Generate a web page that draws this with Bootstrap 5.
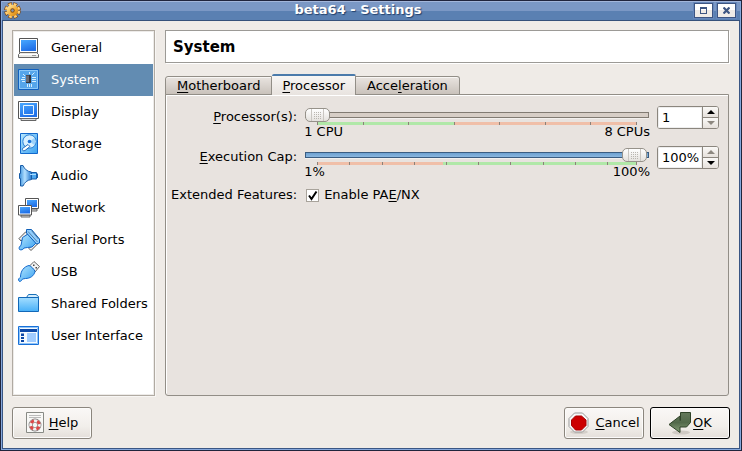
<!DOCTYPE html>
<html lang="en">
<head>
<meta charset="utf-8">
<meta name="viewport" content="width=device-width, initial-scale=1">
<title>beta64 - Settings</title>
<link href="https://cdn.jsdelivr.net/npm/bootstrap@5.3.0/dist/css/bootstrap.min.css" rel="stylesheet">
<style>
body { font: 13px/16px "DejaVu Sans", sans-serif; color: #000; background: #efebe7; }
u { text-decoration-thickness: 1px; text-underline-offset: 2px; text-decoration-skip-ink: none; }
.window { border: 1px solid #20243c; }
.window-inner { border: 1px solid #87a8dc; border-top: 0; }
.titlebar { height: 20px; padding: 0 4px 0 2px; background: linear-gradient(#a3b6da 0 1px, #7b98c5 1px 10px, #5a80b2 10px 19px, #35507a 19px); }
.titlebar h1 { font-size: 13px; line-height: 18px; font-weight: bold; color: #fff; text-shadow: 1px 1px 1px #23406c; }
.win-keys { gap: 4px; padding-top: 2px; }
.win-btn { width: 19px; height: 15px; padding: 0; border: 1px solid #3d5582; background: linear-gradient(#fff 50%, #efebe7 50%); box-shadow: 0 0 0 1px #6687bb; }
.win-btn svg { display: block; margin: auto; }
.client { border: solid #3a5684; border-width: 0 1px 1px; padding: 9px; }
.categories { width: 143px; border: 1px solid #b0aaa2; box-shadow: inset 0 0 0 1px #edebe9, 1px 1px 0 #f8f6f4; background: #fff; padding: 1px; border-radius: 0; }
.categories .list-group-item { height: 32px; padding: 0 4px; gap: 10px; border: 0; color: #000; background: none; }
.categories .list-group-item.active { margin: 0; background: #628cb2; color: #fff; }
.categories svg { width: 23px; height: 23px; margin-top: 1px; flex: none; }
.page { margin: 0 1px 0 10px; }
.page-title { font-size: 15px; line-height: 20px; font-weight: bold; border: 1px solid #9c9a96; background: #fff; padding: 6px 7px 5px; box-shadow: 1px 1px 0 #fff; margin-bottom: 11px; }
.sheets { border: 0; align-items: flex-end; margin-bottom: -1px; position: relative; --bs-nav-tabs-border-width: 0; }
.sheets .nav-link { font-size: 13px; line-height: 16px; padding: 1px 11px 0; margin: 0; color: #000; border: 1px solid #928e87; border-left-width: 0; border-radius: 0; background: linear-gradient(#e9e4e0, #c9c2bb); box-shadow: inset 0 1px 0 #f8f6f4; }
.sheets .nav-item:first-child .nav-link { border-left-width: 1px; border-top-left-radius: 3px; }
.sheets .nav-item:last-child .nav-link { border-top-right-radius: 3px; }
.sheets .nav-link.active { padding: 2px 10px 1px; color: #000; border: 1px solid #928e87; border-top: 2px solid #4b7bab; border-bottom: 0; border-left: 0; border-radius: 2px 2px 0 0; background: linear-gradient(#f8f6f4, #e8e3df); }
.sheet { border: 1px solid #928e87; border-radius: 0 0 3px 3px; background: #e8e3df; box-shadow: inset 1px 1px 0 #fff; padding: 11px 9px 11px 5px; }
.form-rows { display: grid; grid-template-columns: auto 1fr 62px; column-gap: 8px; row-gap: 7px; align-items: start; }
.form-rows > label { text-align: right; padding-top: 3px; }
.slider-box { padding-top: 2px; }
.slide { display: block; width: 100%; height: 14px; margin: 0; appearance: none; background: none; }
.slide::-webkit-slider-runnable-track { height: 6px; border: 1px solid #817b72; background: #d7cec6; box-shadow: 0 1px 0 #f3f0ed; }
.slide.full::-webkit-slider-runnable-track { border-color: #3a5c80; background: linear-gradient(#6ca0d0, #8ab6de); }
.slide::-webkit-slider-thumb { appearance: none; width: 25px; height: 14px; margin: -5px -1px 0; border: 1px solid #96928a; border-radius: 5px;
  background: url("data:image/svg+xml,%3Csvg xmlns='http://www.w3.org/2000/svg' width='7' height='7'%3E%3Cpath d='M0 .5h7M0 2.5h7M0 4.500h7M0 6.500h7' stroke='%23b9b6b0' stroke-dasharray='1 1'/%3E%3C/svg%3E") center no-repeat,
  linear-gradient(90deg, transparent 5px, #c9c6c1 5px 6px, transparent 6px 17px, #c9c6c1 17px 18px, transparent 18px),
  linear-gradient(#fff, #e4e1dd); }
.scale { height: 3px; margin: 0 12px; border-right: 1px solid #8b8178; }
.scale i { flex: 1 1 0; border-left: 1px solid #8b8178; background: #f0bfa8; }
.scale i.ok { background: #b0e8a8; }
.scale i.mix { background: linear-gradient(90deg, #f0bfa8 90%, #b0e8a8 90%); }
.scale i.last { flex-grow: 0.9; }
.ends { line-height: 14px; margin: 0 -1px; }
.spin { height: 23px; border: 1px solid #8b867e; border-radius: 3px; background: #fff; overflow: hidden; }
.spin input { min-width: 0; width: 45px; padding: 0 0 0 4px; border: 0; background: #fff; box-shadow: inset 0 0 0 1px #eee; outline: 0; font: inherit; }
.spin-keys { width: 16px; border-left: 1px solid #8b867e; }
.spin-keys button { flex: 1; padding: 0; border: 0; background: linear-gradient(#faf9f7, #e6e1dc); line-height: 0; }
.spin-keys button + button { border-top: 1px solid #8b867e; }
.spin-keys button:disabled path { fill: #8d8880; }
.features { grid-column: 2 / 4; }
.row-name, .features { padding-top: 1px; }
.tick { appearance: none; width: 13px; height: 13px; margin: 0 5px 0 1px; border: 1px solid #a8a39b; background: #fff url("data:image/svg+xml,%3Csvg xmlns='http://www.w3.org/2000/svg' viewBox='0 0 11 11'%3E%3Cpath d='M2 5.5 4.5 9 9.5 1.5' fill='none' stroke='%23000' stroke-width='2'/%3E%3C/svg%3E"); }
.dlg-btn { min-width: 80px; height: 32px; padding: 0 3px; gap: 5px; font-size: 13px; line-height: 16px; color: #000; border: 1px solid #8b867e; border-radius: 3px; background: linear-gradient(#faf8f6, #f2efeb 60%, #e4dfda); box-shadow: inset 0 0 0 1px #fcfbfa; }
.dlg-btn.main { gap: 1px; border-color: #000; }
.dlg-keys { gap: 6px; margin-top: 11px; }
</style>
<script src="https://cdn.jsdelivr.net/npm/bootstrap@5.3.0/dist/js/bootstrap.bundle.min.js"></script>
</head>
<body>
<svg width="0" height="0" class="position-absolute" aria-hidden="true">
  <defs>
    <linearGradient id="scr" x1="0" y1="0" x2="0.4" y2="1"><stop offset="0" stop-color="#48a8ff"/><stop offset="1" stop-color="#2070e8"/></linearGradient>
    <linearGradient id="sky" x1="0" y1="0" x2="1" y2="1"><stop offset="0" stop-color="#b8e8ff"/><stop offset="1" stop-color="#38a0f0"/></linearGradient>
    <linearGradient id="folder" x1="0" y1="0" x2="0" y2="1"><stop offset="0" stop-color="#a4deff"/><stop offset="1" stop-color="#48b0f8"/></linearGradient>
    <linearGradient id="cone" x1="0" y1="0" x2="1" y2="0"><stop offset="0" stop-color="#3a90dc"/><stop offset=".45" stop-color="#b4e0ff"/><stop offset="1" stop-color="#2478d0"/></linearGradient>
    <linearGradient id="gold" x1="0" y1="0" x2="1" y2="1"><stop offset="0" stop-color="#fff0b0"/><stop offset=".6" stop-color="#f0a830"/><stop offset="1" stop-color="#c87810"/></linearGradient>
    <linearGradient id="leaf" x1="0" y1="0" x2="0" y2="1"><stop offset="0" stop-color="#64795b"/><stop offset=".5" stop-color="#52694a"/><stop offset="1" stop-color="#87a078"/></linearGradient>
  </defs>
</svg>
<div class="window min-vh-100 d-flex">
<div class="window-inner flex-fill d-flex flex-column">
  <header class="titlebar d-flex align-items-start">
    <svg width="18" height="18" viewBox="0 0 18 18" aria-hidden="true">
      <circle cx="8.500" cy="9.500" r="6.300" fill="none" stroke="#7b3f08" stroke-width="4" stroke-dasharray="3.600 1.348"/>
      <circle cx="8.500" cy="9.500" r="6.300" fill="none" stroke="#ffd078" stroke-width="2.800" stroke-dasharray="2.700 2.248" stroke-dashoffset="-.45"/>
      <circle cx="8.500" cy="9.500" r="5.700" fill="url(#gold)"/>
      <circle cx="8.500" cy="9.500" r="2.200" fill="#8a5010"/><circle cx="8.500" cy="9.500" r="1.200" fill="#8398b8"/>
    </svg>
    <h1 class="flex-fill text-center m-0">beta64 - Settings</h1>
    <div class="win-keys d-flex">
      <button type="button" class="win-btn" aria-label="Maximize"><svg width="7" height="7" viewBox="0 0 7 7"><path d="M0 0h7v7H0zM1 2v4h5V2z" fill="#3d5582" fill-rule="evenodd"/></svg></button>
      <button type="button" class="win-btn" aria-label="Close"><svg width="7" height="7" viewBox="0 0 7 7"><path d="M.5.5 6.500 6.500M6.500.5.5 6.500" stroke="#3d5582" stroke-width="2.200"/></svg></button>
    </div>
  </header>
  <main class="client flex-fill d-flex flex-column">
    <div class="d-flex flex-fill">
      <nav class="categories list-group flex-shrink-0" aria-label="Categories">
        <a href="#" class="list-group-item d-flex align-items-center"><svg viewBox="0 0 23 23"><path d="M1.500 1.500h18v14h-18z" fill="#fff" stroke="#555"/><path d="M3 3h15v11H3z" fill="url(#scr)"/><path d="M2.500 15.500h16l2 2v3H.5v-3z" fill="#e8e8e4" stroke="#666"/><path d="M1 17.500h19" stroke="#fff"/><path d="M14 18.500h4" stroke="#999"/></svg>General</a>
        <a href="#" class="list-group-item active d-flex align-items-center" aria-current="true"><svg viewBox="0 0 23 23"><path d="M.5.5h20v20H.5z" fill="#55a5ea" stroke="#1060c0"/><path d="M1.500 1.500h18v18h-18z" fill="none" stroke="#8cc8f8"/><path d="M8 6h5v8H8z" fill="#33343c"/><path d="M8 6.500h3V13H8z" fill="#686a74"/><path d="M4 8.500h3M3 10.500h4M4 12.500h3M14 8.500h4M14 10.500h4M14 12.500h4M9.500 15v3M11.500 15v3M13.500 15v3M5 5l2 2M11.500 5V3M14 6l2.500-2.500" stroke="#d5efff"/></svg>System</a>
        <a href="#" class="list-group-item d-flex align-items-center"><svg viewBox="0 0 23 23"><path d="M.5.500h20v17h-20z" fill="#fff" stroke="#555"/><path d="M2 2h17v14H2z" fill="url(#scr)"/><path d="M5.500 4.500h10v9h-10z" fill="none" stroke="#e6f5ff"/><path d="M3 17.500h15v2H3z" fill="#ddd" stroke="#666"/></svg>Display</a>
        <a href="#" class="list-group-item d-flex align-items-center"><svg viewBox="0 0 23 23"><path d="M2.500.5h17v20h-17z" fill="url(#sky)" stroke="#1268cc"/><circle cx="11.500" cy="8.500" r="6.700" fill="#d8f0ff" stroke="#2880d8"/><path d="M11.500 8.500 17 4.500v8z" fill="#9cd2fa"/><circle cx="11.500" cy="8.500" r="1.800" fill="#1870d8"/><path d="m4.500 15.500 5.500-4 2 2-5 4c-2 1-3-.5-2.500-2z" fill="#fff" stroke="#1460b8" stroke-width=".9"/></svg>Storage</a>
        <a href="#" class="list-group-item d-flex align-items-center"><svg viewBox="0 0 23 23"><path d="M13 7.500h5.500v6.500H13z" fill="#4ca8f0" stroke="#185ca8"/><path d="M18.500 8.500h1.500v4.500h-1.500z" fill="#1c60a8"/><path d="M2.500.5h2.500c1.500 3.500 4 6 8.500 6.500v7.500c-4.500.5-7 3-8.500 6.500H2.500V13.500h-1v-5h1z" fill="url(#cone)" stroke="#185ca8"/><path d="M12 9.500h6" stroke="#aadcff"/></svg>Audio</a>
        <a href="#" class="list-group-item d-flex align-items-center"><svg viewBox="0 0 23 23"><path d="M11 12h8v2h-8z" fill="#ddd" stroke="#666"/><path d="M7.500 1.500h13v10h-13z" fill="#fff" stroke="#555"/><path d="M9 3h10v7H9z" fill="url(#scr)"/><path d="M3 18h9v2H3z" fill="#ddd" stroke="#666"/><path d="M.5 8.500h13v9.500H.5z" fill="#fff" stroke="#555"/><path d="M2 10h10v6.500H2z" fill="url(#scr)"/></svg>Network</a>
        <a href="#" class="list-group-item d-flex align-items-center"><svg viewBox="0 0 23 23"><path d="M1 9.500 7.500 3 10 4.500 3 12zM11 19.500l6-6 2.500 1.500-6.500 6.500z" fill="#eee" stroke="#555"/><path d="M4.500 8.500 10 5l8 9-4 4-4.500.5L6 19c-.5 1.500-3 2.500-4.500 1.500-1-1.500 0-3.500 1.500-4z" fill="url(#sky)" stroke="#1268cc"/><path d="M8.500.5h5l8 9.500v4L18.500 15 8.500 4z" fill="#90ceff" stroke="#1060b8"/><path d="M10 2.500 19.500 13M13.500 1.500l7 8.500" fill="none" stroke="#446a90" stroke-width=".8"/></svg>Serial Ports</a>
        <a href="#" class="list-group-item d-flex align-items-center"><svg viewBox="0 0 23 23"><path d="m11.500 5 4.500-4.500 5.500 5L17 11z" fill="#f4f4f4" stroke="#666"/><path d="M15 3.500h1.500V5H15zM17.500 6H19v1.500h-1.500z" fill="#444"/><path d="M11 4.500c2 .5 5.500 4 6 6-1 4.500-5 7-9.500 7-1 .5-2 0-3 .5-.5 1-1.500 2.500-3 2.500l-1-1.500c0-1.500 1-2 2-3C2.500 10 6 5.500 11 4.500z" fill="url(#sky)" stroke="#1268cc"/></svg>USB</a>
        <a href="#" class="list-group-item d-flex align-items-center"><svg viewBox="0 0 23 23"><path d="M8.500 4.500 10.500 1.500h7.500l2.500 2V8h-12z" fill="#d5edfc" stroke="#1870b8"/><path d="M.5 4.500h20v14H.5z" fill="url(#folder)" stroke="#1268b8"/></svg>Shared Folders</a>
        <a href="#" class="list-group-item d-flex align-items-center"><svg viewBox="0 0 23 23"><path d="M.5 1.500h20v18H.5z" fill="#f4faff" stroke="#1870d8"/><path d="M1.500 2.500h18v16h-18z" fill="none" stroke="#90c4f8"/><path d="M2 4h17v3H2z" fill="#0b48a8"/><path d="M3 8.500h3V11H3zM3 12h3v2H3zM3 15h3v2H3z" fill="#0b48a8"/><path d="M9 8h9v9H9z" fill="#a0ccff"/></svg>User Interface</a>
      </nav>
      <section class="page flex-fill d-flex flex-column">
        <h2 class="page-title">System</h2>
        <ul class="nav nav-tabs sheets" role="tablist">
          <li class="nav-item"><button type="button" class="nav-link" role="tab"><u>M</u>otherboard</button></li>
          <li class="nav-item"><button type="button" class="nav-link active" role="tab" aria-selected="true"><u>P</u>rocessor</button></li>
          <li class="nav-item"><button type="button" class="nav-link" role="tab">Acce<u>l</u>eration</button></li>
        </ul>
        <div class="sheet flex-fill">
          <div class="form-rows">
            <label for="cpus"><u>P</u>rocessor(s):</label>
            <div class="slider-box">
              <input type="range" class="slide" id="cpus" min="1" max="8" value="1">
              <div class="scale d-flex"><i class="ok"></i><i class="ok"></i><i class="ok"></i><i></i><i></i><i></i><i></i></div>
              <div class="ends d-flex justify-content-between"><span>1 CPU</span><span>8 CPUs</span></div>
            </div>
            <div class="spin d-flex">
              <input type="text" value="1" aria-label="Processor count">
              <div class="spin-keys d-flex flex-column">
                <button type="button" aria-label="More"><svg width="8" height="4" viewBox="0 0 8 4"><path d="M0 4 4 0l4 4z"/></svg></button>
                <button type="button" aria-label="Fewer" disabled><svg width="8" height="4" viewBox="0 0 8 4"><path d="M0 0h8L4 4z"/></svg></button>
              </div>
            </div>
            <label for="cap"><u>E</u>xecution Cap:</label>
            <div class="slider-box">
              <input type="range" class="slide full" id="cap" min="1" max="100" value="100">
              <div class="scale d-flex"><i></i><i></i><i></i><i class="mix"></i><i class="ok"></i><i class="ok"></i><i class="ok"></i><i class="ok"></i><i class="ok"></i><i class="ok last"></i></div>
              <div class="ends d-flex justify-content-between"><span>1%</span><span>100%</span></div>
            </div>
            <div class="spin d-flex">
              <input type="text" value="100%" aria-label="Execution cap">
              <div class="spin-keys d-flex flex-column">
                <button type="button" aria-label="Raise" disabled><svg width="8" height="4" viewBox="0 0 8 4"><path d="M0 4 4 0l4 4z"/></svg></button>
                <button type="button" aria-label="Lower"><svg width="8" height="4" viewBox="0 0 8 4"><path d="M0 0h8L4 4z"/></svg></button>
              </div>
            </div>
            <span class="row-name text-end">Extended Features:</span>
            <div class="features d-flex align-items-center">
              <input type="checkbox" class="tick" id="pae" checked><label for="pae">Enable PA<u>E</u>/NX</label>
            </div>
          </div>
        </div>
      </section>
    </div>
    <footer class="dlg-keys d-flex">
      <button type="button" class="btn dlg-btn me-auto d-flex align-items-center justify-content-center"><svg width="18" height="22" viewBox="0 0 18 22"><path d="M.5.5h17v20H.5z" fill="#f8f8f6" stroke="#888a85"/><path d="M3 3.500h12M3 5.500h12" stroke="#bbb"/><circle cx="9" cy="13" r="4.300" fill="none" stroke="#777" stroke-width="4.200"/><circle cx="9" cy="13" r="4.300" fill="none" stroke="#f2eeee" stroke-width="3"/><circle cx="9" cy="13" r="4.300" fill="none" stroke="#dc4848" stroke-width="3" stroke-dasharray="3.380 3.374" stroke-dashoffset="5"/></svg><span><u>H</u>elp</span></button>
      <button type="button" class="btn dlg-btn d-flex align-items-center justify-content-center"><svg width="22" height="22" viewBox="0 0 22 22"><ellipse cx="11" cy="20" rx="9" ry="2" fill="#d4cfc9"/><path d="M6.500 1h8L20 6.500v8L14.500 20h-8L1 14.500v-8z" fill="#f8f8f8" stroke="#999"/><path d="M7.500 4h6L18 8v5.500L13.500 18h-6L3.500 13.500V8z" fill="#cc0000" stroke="#a00"/></svg><span><u>C</u>ancel</span></button>
      <button type="submit" class="btn dlg-btn main d-flex align-items-center justify-content-center"><svg width="24" height="24" viewBox="0 0 24 24"><ellipse cx="13" cy="21.500" rx="9" ry="2" fill="#cfcac4"/><path d="M12.500 1.500h10v10l-4 4.500h-6.500v5.500L1 13.500l11-8.500v4.500h.5z" fill="url(#leaf)" stroke="#2f4328"/></svg><span><u>O</u>K</span></button>
    </footer>
  </main>
</div>
</div>
</body>
</html>
